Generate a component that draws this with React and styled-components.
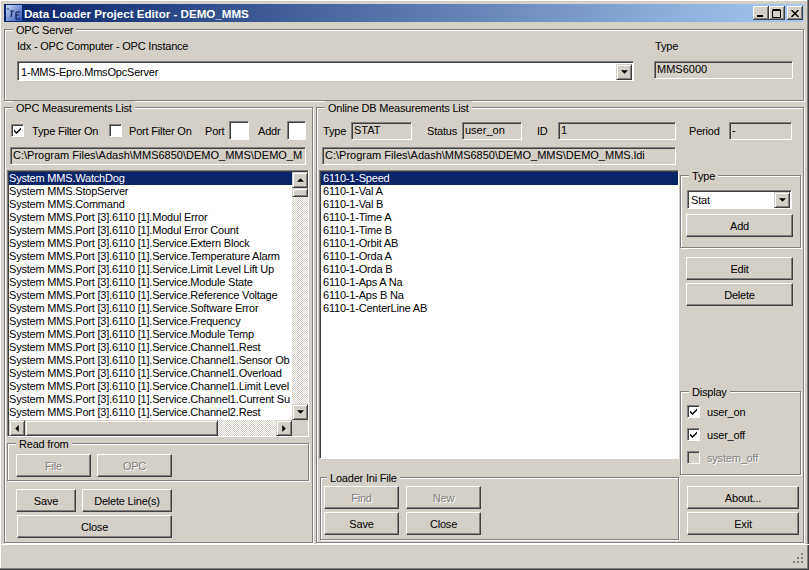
import styled, { createGlobalStyle } from "styled-components";

const GlobalStyle = createGlobalStyle`
  html, body {
    margin: 0;
    padding: 0;
    background: #d4d0c8;
  }
  body {
    font-family: "Liberation Sans", Arial, sans-serif;
    font-size: 11px;
    letter-spacing: -0.2px;
    color: #000;
  }
  * { box-sizing: border-box; }
`;

const Window = styled.div`
  width: 809px;
  height: 570px;
  display: flex;
  flex-direction: column;
  background: #d4d0c8;
  overflow: hidden;
  padding: 4px 5px 2px 4px;
  box-shadow: inset -1px -1px 0 #404040, inset -2px -2px 0 #808080, inset 1px 1px 0 #fff;
`;

const TitleBar = styled.div`
  height: 18px;
  flex: none;
  display: flex;
  align-items: center;
  padding: 0 1px 0 2px;
  background: linear-gradient(90deg, #0a246a, #a6caf0);
  color: #fff;
  font-weight: bold;
  font-size: 11.6px;
  letter-spacing: 0;
`;

const TitleText = styled.span`
  margin-left: 2px;
  flex: 1;
`;

const CaptionButton = styled.div`
  width: 16px;
  height: 14px;
  margin-left: ${(p) => (p.$gap ? "2px" : "0")};
  background: #d4d0c8;
  box-shadow: inset -1px -1px 0 #404040, inset 1px 1px 0 #fff, inset -2px -2px 0 #808080;
  display: flex;
  align-items: center;
  justify-content: center;
`;

const Client = styled.div`
  flex: 1;
  display: flex;
  flex-direction: column;
  padding-top: 7px;
  min-height: 0;
`;

const Group = styled.div`
  position: relative;
  border: 1px solid #808080;
  box-shadow: inset 1px 1px 0 #fff, 1px 1px 0 #fff;
`;

const Legend = styled.span`
  position: absolute;
  top: -7px;
  left: ${(p) => p.$left || 8}px;
  padding: 0 3px;
  background: #d4d0c8;
  line-height: 14px;
  white-space: nowrap;
`;

const ServerGroup = styled(Group)`
  height: 72px;
  flex: none;
  display: flex;
  padding: 9px 0 0 12px;
  gap: 20px;
`;

const ServerCol = styled.div`
  display: flex;
  flex-direction: column;
  width: ${(p) => p.$w}px;
`;

const Caption = styled.div`
  line-height: 14px;
  margin-left: ${(p) => p.$ml || 0}px;
  margin-bottom: 8px;
`;

const Field = styled.div`
  height: ${(p) => p.$h || 18}px;
  width: ${(p) => p.$w}px;
  flex: none;
  background: ${(p) => (p.$white ? "#fff" : "#d4d0c8")};
  border: 1px solid;
  border-color: #808080 #fff #fff #808080;
  box-shadow: inset 1px 1px 0 #404040;
  padding: 0 0 0 2px;
  line-height: 15px;
  letter-spacing: 0;
  white-space: nowrap;
  overflow: hidden;
`;

const Combo = styled.div`
  height: ${(p) => p.$h}px;
  display: flex;
  align-items: center;
  background: #fff;
  border: 1px solid;
  border-color: #808080 #fff #fff #808080;
  box-shadow: inset 1px 1px 0 #404040;
  padding: 2px 1px 1px 3px;
`;

const ComboText = styled.span`
  flex: 1;
`;

const ArrowBtn = styled.div`
  width: 16px;
  height: 16px;
  flex: none;
  background: #d4d0c8;
  border: 1px solid;
  border-color: #d4d0c8 #404040 #404040 #d4d0c8;
  box-shadow: inset 1px 1px 0 #fff, inset -1px -1px 0 #808080;
  display: flex;
  align-items: center;
  justify-content: center;
`;

const Main = styled.div`
  height: 436px;
  flex: none;
  display: flex;
  gap: 3px;
  margin-top: 6px;
`;

const LeftPanel = styled(Group)`
  width: 309px;
  flex: none;
  padding: 13px 0 0 2px;
`;

const RightPanel = styled(Group)`
  width: 488px;
  flex: none;
  padding: 13px 0 0 2px;
`;

const FilterRow = styled.div`
  height: 19px;
  display: flex;
  align-items: center;
  margin-left: 4px;
`;

const CheckRow = styled.div`
  height: 13px;
  display: flex;
  align-items: center;
`;

const Box = styled.span`
  width: 13px;
  height: 13px;
  flex: none;
  background: ${(p) => (p.$off ? "#d4d0c8" : "#fff")};
  border: 1px solid;
  border-color: #808080 #fff #fff #808080;
  box-shadow: inset 1px 1px 0 #404040;
  display: flex;
  align-items: center;
  justify-content: center;
`;

const BoxLabel = styled.span`
  margin-left: ${(p) => p.$ml || 7}px;
  width: ${(p) => (p.$w ? p.$w + "px" : "auto")};
  white-space: nowrap;
  color: ${(p) => (p.$off ? "#808080" : "#000")};
  text-shadow: ${(p) => (p.$off ? "1px 1px 0 #fff" : "none")};
`;

const FormLabel = styled.span`
  width: ${(p) => p.$w}px;
  margin-left: ${(p) => p.$ml || 0}px;
  flex: none;
  white-space: nowrap;
`;

const PathRow = styled.div`
  margin: 7px 0 5px ${(p) => p.$ml}px;
  display: flex;
`;

const ListFrame = styled.div`
  position: relative;
  width: ${(p) => p.$w}px;
  height: ${(p) => p.$h}px;
  background: #fff;
  border: 1px solid;
  border-color: #808080 #fff #fff #808080;
  box-shadow: inset 1px 1px 0 #404040;
  padding: 1px 0 0 1px;
  display: flex;
  overflow: hidden;
`;

const Rows = styled.div`
  flex: 1;
  min-width: 0;
  overflow: hidden;
`;

const Row = styled.div`
  height: 13px;
  line-height: 13px;
  padding-left: ${(p) => p.$pad || 0}px;
  white-space: nowrap;
  background: ${(p) => (p.$sel ? "#0a246a" : "transparent")};
  color: ${(p) => (p.$sel ? "#fff" : "#000")};
`;

const VScroll = styled.div`
  position: absolute;
  right: 0;
  top: 1px;
  bottom: 16px;
  width: 16px;
  display: flex;
  flex-direction: column;
  background: repeating-conic-gradient(#fff 0 25%, #d4d0c8 0 50%) 0 0 / 2px 2px;
`;

const HScroll = styled.div`
  position: absolute;
  left: 1px;
  right: 16px;
  bottom: 0;
  height: 16px;
  display: flex;
  background: repeating-conic-gradient(#fff 0 25%, #d4d0c8 0 50%) 0 0 / 2px 2px;
`;

const Corner = styled.div`
  position: absolute;
  right: 0;
  bottom: 0;
  width: 16px;
  height: 16px;
  background: #d4d0c8;
`;

const Thumb = styled.div`
  flex: none;
  width: ${(p) => (p.$w ? p.$w + "px" : "auto")};
  height: ${(p) => (p.$h ? p.$h + "px" : "auto")};
  background: #d4d0c8;
  border: 1px solid;
  border-color: #d4d0c8 #404040 #404040 #d4d0c8;
  box-shadow: inset 1px 1px 0 #fff, inset -1px -1px 0 #808080;
`;

const Spacer = styled.div`
  flex: 1;
`;

const ReadGroup = styled(Group)`
  height: 38px;
  margin-top: 6px;
  width: 302px;
  padding: 10px 0 0 8px;
  display: flex;
  gap: 6px;
`;

const Button = styled.div`
  width: ${(p) => p.$w}px;
  height: 23px;
  flex: none;
  margin: ${(p) => p.$m || 0};
  background: #d4d0c8;
  border: 1px solid;
  border-color: #fff #404040 #404040 #fff;
  box-shadow: inset -1px -1px 0 #808080;
  display: flex;
  align-items: center;
  justify-content: center;
  color: ${(p) => (p.$off ? "#808080" : "#000")};
  text-shadow: ${(p) => (p.$off ? "1px 1px 0 #fff" : "none")};
`;

const ButtonRow = styled.div`
  display: flex;
  gap: ${(p) => p.$gap || 6}px;
  margin: ${(p) => p.$m || 0};
`;

const Content = styled.div`
  display: flex;
`;

const ContentLeft = styled.div`
  width: 361px;
  flex: none;
`;

const LoaderGroup = styled(Group)`
  width: 359px;
  height: 63px;
  margin: 18px 0 0 1px;
  padding: 8px 0 0 3px;
`;

const SideCol = styled.div`
  width: 122px;
  flex: none;
  margin-top: 5px;
  display: flex;
  flex-direction: column;
  align-items: flex-start;
`;

const TypeGroup = styled(Group)`
  width: 121px;
  height: 73px;
  padding: 14px 0 0 6px;
`;

const SmallCombo = styled(Combo)`
  width: 105px;
`;

const SideButtons = styled.div`
  display: flex;
  flex-direction: column;
  gap: 3px;
  margin: ${(p) => p.$m};
`;

const DisplayGroup = styled(Group)`
  width: 121px;
  height: 84px;
  margin-top: 85px;
  padding: 13px 0 0 6px;
  display: flex;
  flex-direction: column;
  gap: 10px;
`;

const StatusBar = styled.div`
  flex: 1;
  margin: 1px -5px 0 -4px;
  border-top: 1px solid #fff;
  position: relative;
`;

const Grip = styled.svg`
  position: absolute;
  right: 5px;
  bottom: 4px;
`;

const ArrowGlyph = ({ dir = "down" }) => {
  const pts = {
    down: "0,0 6,0 3,3",
    up: "3,0 6,3 0,3",
    left: "3,0 3,6 0,3",
    right: "0,0 3,3 0,6",
  }[dir];
  const vertical = dir === "down" || dir === "up";
  return (
    <svg width={vertical ? 7 : 4} height={vertical ? 4 : 7} viewBox={vertical ? "0 0 6 3" : "0 0 3 6"}>
      <polygon points={pts} fill="#000" />
    </svg>
  );
};

const Check = () => (
  <svg width="9" height="9" viewBox="0 0 9 9">
    <path d="M1 3.5 L3.5 6 L8 1.5 V3.5 L3.5 8 L1 5.5 Z" fill="#000" />
  </svg>
);

const AppIcon = () => (
  <svg width="16" height="16" viewBox="0 0 16 16">
    <defs>
      <linearGradient id="ico" x1="0" y1="0" x2="1" y2="1">
        <stop offset="0" stopColor="#c8d8f4" />
        <stop offset="1" stopColor="#2c50b4" />
      </linearGradient>
    </defs>
    <rect width="16" height="16" fill="url(#ico)" />
    <path d="M2 3 V5" stroke="#10204c" strokeWidth="1" />
    <path d="M4 6 H8 M6 6 L5 12" stroke="#10204c" strokeWidth="1.2" fill="none" />
    <path d="M10 7 H14 M10 7 V14 M10 10 H13 M10 14 H14" stroke="#10204c" strokeWidth="1.2" fill="none" />
  </svg>
);

const CheckItem = ({ label, checked, off }) => (
  <CheckRow>
    <Box $off={off}>{checked && <Check />}</Box>
    <BoxLabel $off={off}>{label}</BoxLabel>
  </CheckRow>
);

const opcItems = [
  "System MMS.WatchDog",
  "System MMS.StopServer",
  "System MMS.Command",
  "System MMS.Port [3].6110 [1].Modul Error",
  "System MMS.Port [3].6110 [1].Modul Error Count",
  "System MMS.Port [3].6110 [1].Service.Extern Block",
  "System MMS.Port [3].6110 [1].Service.Temperature Alarm",
  "System MMS.Port [3].6110 [1].Service.Limit Level Lift Up",
  "System MMS.Port [3].6110 [1].Service.Module State",
  "System MMS.Port [3].6110 [1].Service.Reference Voltage",
  "System MMS.Port [3].6110 [1].Service.Software Error",
  "System MMS.Port [3].6110 [1].Service.Frequency",
  "System MMS.Port [3].6110 [1].Service.Module Temp",
  "System MMS.Port [3].6110 [1].Service.Channel1.Rest",
  "System MMS.Port [3].6110 [1].Service.Channel1.Sensor Ob",
  "System MMS.Port [3].6110 [1].Service.Channel1.Overload",
  "System MMS.Port [3].6110 [1].Service.Channel1.Limit Level",
  "System MMS.Port [3].6110 [1].Service.Channel1.Current Su",
  "System MMS.Port [3].6110 [1].Service.Channel2.Rest",
];

const dbItems = [
  "6110-1-Speed",
  "6110-1-Val A",
  "6110-1-Val B",
  "6110-1-Time A",
  "6110-1-Time B",
  "6110-1-Orbit AB",
  "6110-1-Orda A",
  "6110-1-Orda B",
  "6110-1-Aps A Na",
  "6110-1-Aps B Na",
  "6110-1-CenterLine AB",
];

export default function App() {
  return (
    <Window>
      <GlobalStyle />
      <TitleBar>
        <AppIcon />
        <TitleText>Data Loader Project Editor - DEMO_MMS</TitleText>
        <CaptionButton>
          <svg width="8" height="8" viewBox="0 0 8 8"><rect x="0" y="6" width="6" height="2" fill="#000" /></svg>
        </CaptionButton>
        <CaptionButton>
          <svg width="10" height="9" viewBox="0 0 10 9"><path d="M0.5 1.5 H8.5 V8.5 H0.5 Z M0.5 0.5 H8.5" stroke="#000" fill="none" /></svg>
        </CaptionButton>
        <CaptionButton $gap>
          <svg width="8" height="7" viewBox="0 0 8 7"><path d="M0.5 0 L7.5 7 M7.5 0 L0.5 7" stroke="#000" strokeWidth="1.4" /></svg>
        </CaptionButton>
      </TitleBar>
      <Client>
        <ServerGroup>
          <Legend>OPC Server</Legend>
          <ServerCol $w={617}>
            <Caption>Idx - OPC Computer - OPC Instance</Caption>
            <Combo $h={20}>
              <ComboText>1-MMS-Epro.MmsOpcServer</ComboText>
              <ArrowBtn><ArrowGlyph /></ArrowBtn>
            </Combo>
          </ServerCol>
          <ServerCol $w={139}>
            <Caption $ml={1}>Type</Caption>
            <Field $w={139}>MMS6000</Field>
          </ServerCol>
        </ServerGroup>
        <Main>
          <LeftPanel>
            <Legend>OPC Measurements List</Legend>
            <FilterRow>
              <Box><Check /></Box>
              <BoxLabel $ml={8} $w={77}>Type Filter On</BoxLabel>
              <Box />
              <BoxLabel $w={76}>Port Filter On</BoxLabel>
              <FormLabel $w={24}>Port</FormLabel>
              <Field $w={20} $white $h={19} />
              <FormLabel $w={29} $ml={9}>Addr</FormLabel>
              <Field $w={19} $white $h={19} />
            </FilterRow>
            <PathRow $ml={3}>
              <Field $w={296}>C:\Program Files\Adash\MMS6850\DEMO_MMS\DEMO_M</Field>
            </PathRow>
            <ListFrame $w={302} $h={267}>
              <Rows>
                {opcItems.map((t, i) => (
                  <Row key={t} $sel={i === 0}>{t}</Row>
                ))}
              </Rows>
              <VScroll>
                <ArrowBtn><ArrowGlyph dir="up" /></ArrowBtn>
                <Thumb $h={9} />
                <Spacer />
                <ArrowBtn><ArrowGlyph /></ArrowBtn>
              </VScroll>
              <HScroll>
                <ArrowBtn><ArrowGlyph dir="left" /></ArrowBtn>
                <Thumb $w={193} />
                <Spacer />
                <ArrowBtn><ArrowGlyph dir="right" /></ArrowBtn>
              </HScroll>
              <Corner />
            </ListFrame>
            <ReadGroup>
              <Legend>Read from</Legend>
              <Button $w={75} $off>File</Button>
              <Button $w={75} $off>OPC</Button>
            </ReadGroup>
            <ButtonRow $m="8px 0 0 9px">
              <Button $w={60}>Save</Button>
              <Button $w={90}>Delete Line(s)</Button>
            </ButtonRow>
            <ButtonRow $m="3px 0 0 10px">
              <Button $w={155}>Close</Button>
            </ButtonRow>
          </LeftPanel>
          <RightPanel>
            <Legend>Online DB Measurements List</Legend>
            <FilterRow>
              <FormLabel $w={28}>Type</FormLabel>
              <Field $w={61}>STAT</Field>
              <FormLabel $w={35} $ml={15}>Status</FormLabel>
              <Field $w={60}>user_on</Field>
              <FormLabel $w={21} $ml={15}>ID</FormLabel>
              <Field $w={118}>1</Field>
              <FormLabel $w={40} $ml={13}>Period</FormLabel>
              <Field $w={63}>-</Field>
            </FilterRow>
            <PathRow $ml={3}>
              <Field $w={354}>C:\Program Files\Adash\MMS6850\DEMO_MMS\DEMO_MMS.ldi</Field>
            </PathRow>
            <Content>
              <ContentLeft>
                <ListFrame $w={360} $h={289}>
                  <Rows>
                    {dbItems.map((t, i) => (
                      <Row key={t} $sel={i === 0} $pad={2}>{t}</Row>
                    ))}
                  </Rows>
                </ListFrame>
                <LoaderGroup>
                  <Legend $left={6}>Loader Ini File</Legend>
                  <ButtonRow $gap={7}>
                    <Button $w={75} $off>Find</Button>
                    <Button $w={75} $off>New</Button>
                  </ButtonRow>
                  <ButtonRow $gap={7} $m="3px 0 0 0">
                    <Button $w={75}>Save</Button>
                    <Button $w={75}>Close</Button>
                  </ButtonRow>
                </LoaderGroup>
              </ContentLeft>
              <SideCol>
                <TypeGroup>
                  <Legend>Type</Legend>
                  <SmallCombo $h={19}>
                    <ComboText>Stat</ComboText>
                    <ArrowBtn><ArrowGlyph /></ArrowBtn>
                  </SmallCombo>
                  <Button $w={107} $m="5px 0 0 -1px">Add</Button>
                </TypeGroup>
                <SideButtons $m="9px 0 0 6px">
                  <Button $w={107}>Edit</Button>
                  <Button $w={107}>Delete</Button>
                </SideButtons>
                <DisplayGroup>
                  <Legend>Display</Legend>
                  <CheckItem label="user_on" checked />
                  <CheckItem label="user_off" checked />
                  <CheckItem label="system_off" off />
                </DisplayGroup>
                <SideButtons $m="11px 0 0 7px">
                  <Button $w={112}>About...</Button>
                  <Button $w={112}>Exit</Button>
                </SideButtons>
              </SideCol>
            </Content>
          </RightPanel>
        </Main>
        <StatusBar>
          <Grip width="12" height="12" viewBox="0 0 12 12">
            <path d="M9 1h2v2H9zM5 5h2v2H5zM9 5h2v2H9zM1 9h2v2H1zM5 9h2v2H5zM9 9h2v2H9z" fill="#808080" />
          </Grip>
        </StatusBar>
      </Client>
    </Window>
  );
}
